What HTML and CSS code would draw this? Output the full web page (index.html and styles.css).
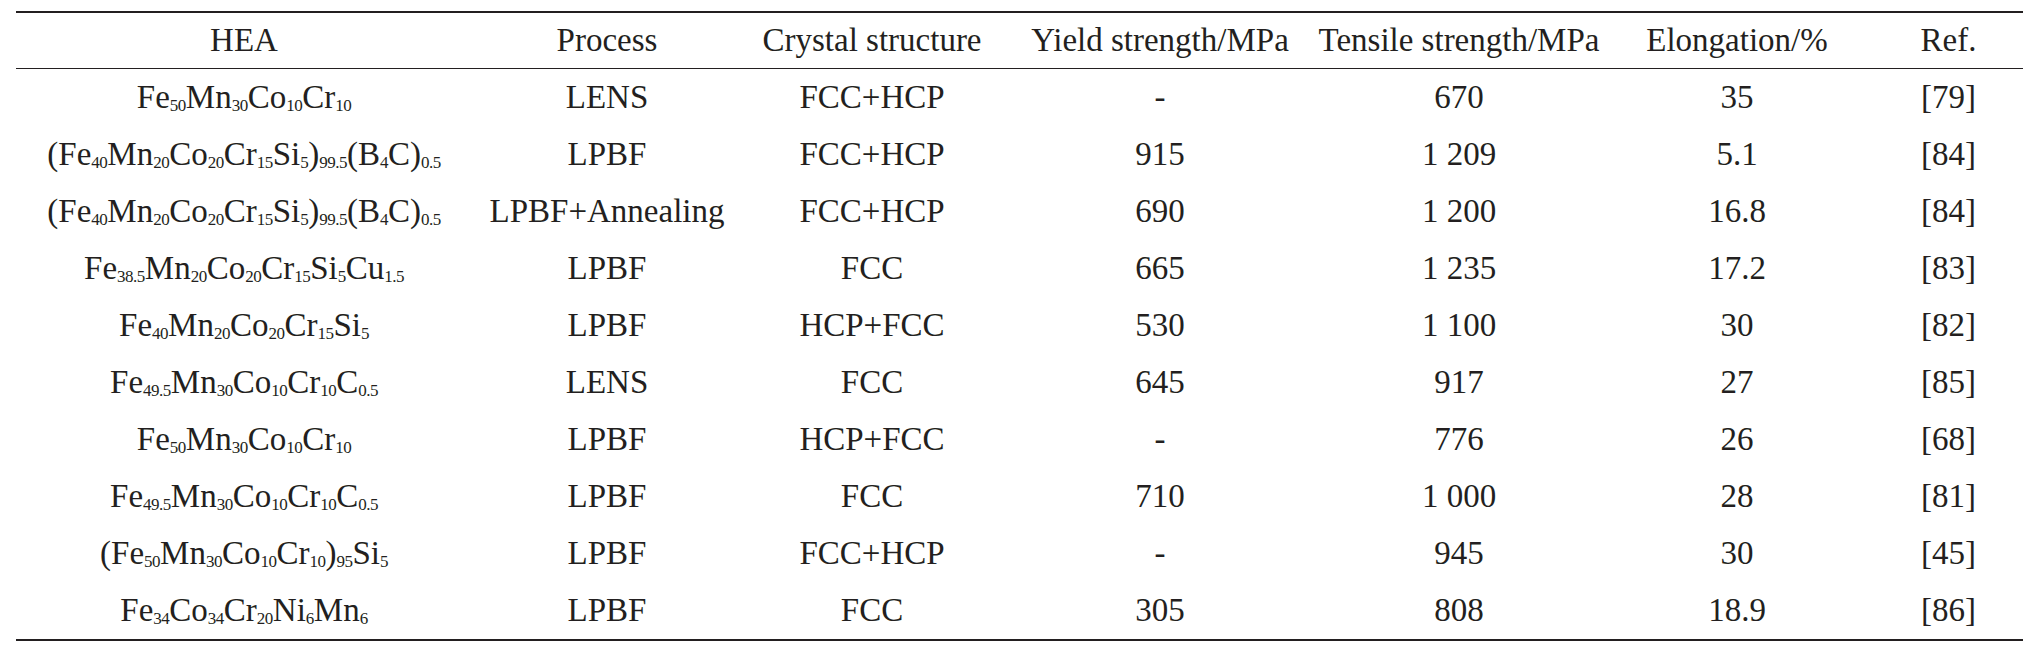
FILE: index.html
```html
<!DOCTYPE html>
<html lang="en">
<head>
<meta charset="utf-8">
<title>HEA table</title>
<link rel="stylesheet" href="styles.css">
</head>
<body>
<table class="data">
  <colgroup>
    <col class="c1"><col class="c2"><col class="c3"><col class="c4"><col class="c5"><col class="c6"><col class="c7">
  </colgroup>
  <thead>
    <tr>
      <th>HEA</th><th>Process</th><th>Crystal structure</th><th>Yield strength/MPa</th><th>Tensile strength/MPa</th><th>Elongation/%</th><th>Ref.</th>
    </tr>
  </thead>
  <tbody>
    <tr>
      <td>Fe<sub>50</sub>Mn<sub>30</sub>Co<sub>10</sub>Cr<sub>10</sub></td><td>LENS</td><td>FCC+HCP</td><td>-</td><td>670</td><td>35</td><td>[79]</td>
    </tr>
    <tr>
      <td>(Fe<sub>40</sub>Mn<sub>20</sub>Co<sub>20</sub>Cr<sub>15</sub>Si<sub>5</sub>)<sub>99.5</sub>(B<sub>4</sub>C)<sub>0.5</sub></td><td>LPBF</td><td>FCC+HCP</td><td>915</td><td>1 209</td><td>5.1</td><td>[84]</td>
    </tr>
    <tr>
      <td>(Fe<sub>40</sub>Mn<sub>20</sub>Co<sub>20</sub>Cr<sub>15</sub>Si<sub>5</sub>)<sub>99.5</sub>(B<sub>4</sub>C)<sub>0.5</sub></td><td>LPBF+Annealing</td><td>FCC+HCP</td><td>690</td><td>1 200</td><td>16.8</td><td>[84]</td>
    </tr>
    <tr>
      <td>Fe<sub>38.5</sub>Mn<sub>20</sub>Co<sub>20</sub>Cr<sub>15</sub>Si<sub>5</sub>Cu<sub>1.5</sub></td><td>LPBF</td><td>FCC</td><td>665</td><td>1 235</td><td>17.2</td><td>[83]</td>
    </tr>
    <tr>
      <td>Fe<sub>40</sub>Mn<sub>20</sub>Co<sub>20</sub>Cr<sub>15</sub>Si<sub>5</sub></td><td>LPBF</td><td>HCP+FCC</td><td>530</td><td>1 100</td><td>30</td><td>[82]</td>
    </tr>
    <tr>
      <td>Fe<sub>49.5</sub>Mn<sub>30</sub>Co<sub>10</sub>Cr<sub>10</sub>C<sub>0.5</sub></td><td>LENS</td><td>FCC</td><td>645</td><td>917</td><td>27</td><td>[85]</td>
    </tr>
    <tr>
      <td>Fe<sub>50</sub>Mn<sub>30</sub>Co<sub>10</sub>Cr<sub>10</sub></td><td>LPBF</td><td>HCP+FCC</td><td>-</td><td>776</td><td>26</td><td>[68]</td>
    </tr>
    <tr>
      <td>Fe<sub>49.5</sub>Mn<sub>30</sub>Co<sub>10</sub>Cr<sub>10</sub>C<sub>0.5</sub></td><td>LPBF</td><td>FCC</td><td>710</td><td>1 000</td><td>28</td><td>[81]</td>
    </tr>
    <tr>
      <td>(Fe<sub>50</sub>Mn<sub>30</sub>Co<sub>10</sub>Cr<sub>10</sub>)<sub>95</sub>Si<sub>5</sub></td><td>LPBF</td><td>FCC+HCP</td><td>-</td><td>945</td><td>30</td><td>[45]</td>
    </tr>
    <tr>
      <td>Fe<sub>34</sub>Co<sub>34</sub>Cr<sub>20</sub>Ni<sub>6</sub>Mn<sub>6</sub></td><td>LPBF</td><td>FCC</td><td>305</td><td>808</td><td>18.9</td><td>[86]</td>
    </tr>
  </tbody>
</table>
</body>
</html>
```

FILE: styles.css
```css
html, body {
  margin: 0;
  padding: 0;
  background: #ffffff;
}

body {
  padding: 11px 0 0 16px;
  font-family: "Liberation Serif", "Times New Roman", serif;
  color: #231f20;
}

.data {
  width: 2007px;
  table-layout: fixed;
  border-collapse: collapse;
  border-top: 2px solid #231f20;
  border-bottom: 2px solid #231f20;
  font-family: "Liberation Serif", "Times New Roman", serif;
  font-size: 33px;
  line-height: 1;
  color: #231f20;
}

.c1 { width: 456px; }
.c2 { width: 270px; }
.c3 { width: 260px; }
.c4 { width: 316px; }
.c5 { width: 282px; }
.c6 { width: 274px; }
.c7 { width: 149px; }

.data th,
.data td {
  padding: 0;
  text-align: center;
  vertical-align: middle;
  font-family: "Liberation Serif", "Times New Roman", serif;
  font-weight: normal;
  white-space: nowrap;
}

.data th {
  height: 55px;
  border-bottom: 1px solid #231f20;
}

.data td {
  height: 57px;
}

.data sub {
  font-size: 17px;
  line-height: 0;
  vertical-align: -3px;
  letter-spacing: -0.5px;
}
```
